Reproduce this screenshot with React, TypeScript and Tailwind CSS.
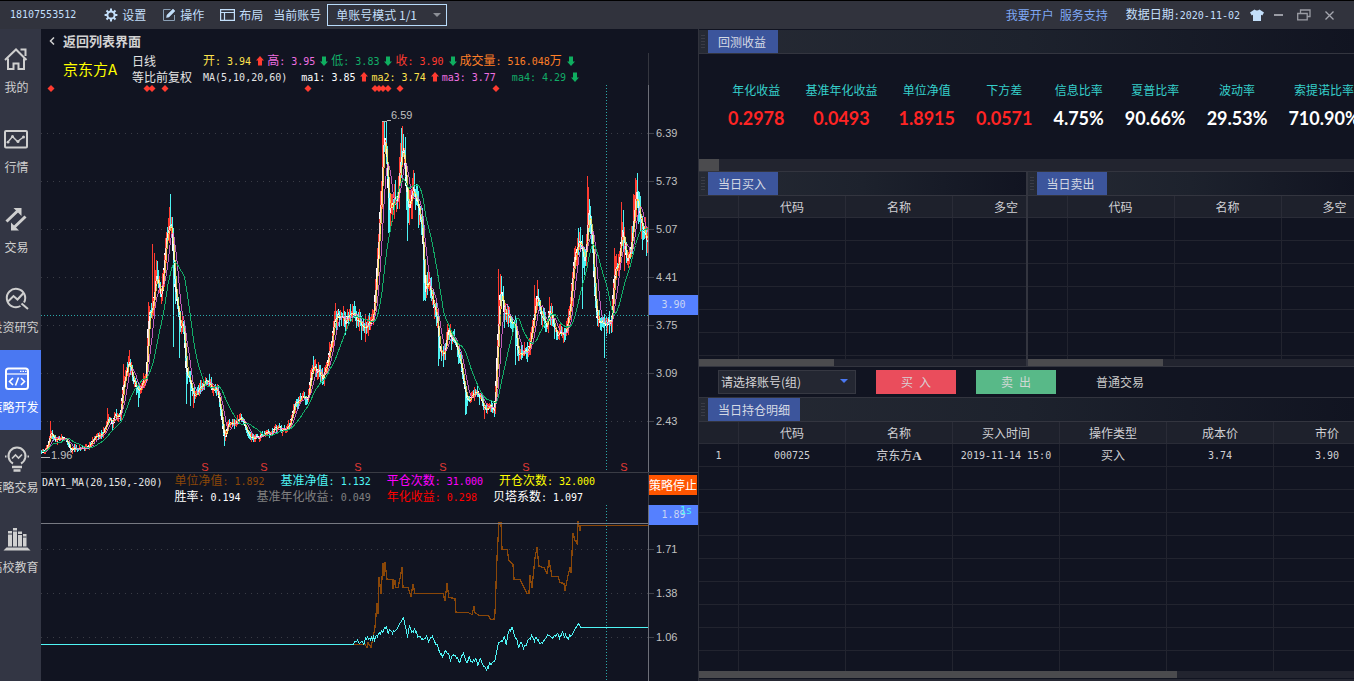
import type { ReactNode } from 'react';
import clsx from 'clsx';

type Point = [number, number];

// Price curve in chart pixels
const PRICE: Point[] = [
  [41, 453], [44, 451], [48, 444], [50, 433], [55, 440], [65, 438], [70, 449], [77, 448], [88, 447], [95, 437],
  [102, 435], [108, 417], [112, 423], [114, 416], [120, 415], [123, 383], [129, 362], [133, 380], [138, 393],
  [143, 380], [146, 377], [148, 313], [152, 307], [156, 273], [161, 297], [164, 263], [167, 233], [171, 228],
  [174, 283], [177, 307], [180, 333], [183, 323], [186, 373], [190, 383], [194, 397], [200, 387], [206, 380],
  [211, 388], [217, 388], [220, 410], [224, 440], [228, 423], [233, 423], [240, 418], [245, 427], [250, 437],
  [258, 437], [265, 432], [270, 433], [277, 427], [285, 432], [290, 423], [293, 407], [300, 397], [307, 400],
  [311, 373], [313, 367], [323, 377], [328, 357], [335, 317], [340, 315], [345, 323], [350, 310], [357, 320],
  [363, 328], [370, 322], [373, 317], [376, 277], [378, 240], [382, 173], [383, 140], [386, 147], [389, 213],
  [393, 200], [398, 190], [402, 140], [405, 173], [408, 213], [413, 190], [417, 203], [422, 233], [424, 290],
  [428, 283], [433, 303], [437, 320], [439, 353], [443, 357], [447, 333], [452, 340], [457, 347], [462, 373],
  [466, 400], [470, 397], [474, 390], [480, 400], [485, 410], [490, 405], [494, 410], [496, 373], [498, 323],
  [500, 290], [504, 313], [510, 320], [515, 323], [517, 353], [523, 353], [529, 350], [533, 320], [537, 297],
  [542, 320], [547, 327], [549, 310], [555, 330], [562, 337], [567, 330], [571, 290], [574, 257], [579, 240],
  [583, 260], [586, 250], [588, 200], [592, 240], [594, 290], [597, 320], [605, 328], [608, 317], [611, 327],
  [614, 267], [618, 267], [622, 230], [626, 260], [630, 253], [633, 220], [636, 190], [639, 213], [643, 233],
  [648, 243],
];

// Long wicks: x -> far end of the wick
const WICKS: Record<number, number> = {
  50: 421, 107: 408, 123: 364, 129: 350, 138: 407, 152: 244, 154: 253, 157: 261, 169: 207, 170: 194, 173: 347,
  179: 358, 186: 404, 190: 406, 193: 408, 224: 446, 313: 356, 335: 303, 361: 340, 382: 121, 386: 122, 388: 233,
  402: 127, 401: 128, 407: 241, 413: 170, 423: 301, 424: 300, 438: 366, 443: 367, 447: 324, 465: 415, 466: 414,
  484: 419, 494: 417, 498: 269, 500: 278, 515: 365, 534: 285, 537: 287, 549: 297, 578: 228, 582: 309, 587: 176,
  588: 187, 604: 358, 614: 248, 621: 202, 624: 271, 633: 194, 635: 178, 636: 180, 642: 250, 646: 256,
};

const NET_VALUE: Point[] = [
  [353, 644], [365, 644], [367, 647], [368, 642], [371, 647], [373, 637], [375, 627], [377, 603], [378, 613],
  [379, 577], [381, 593], [383, 563], [384, 575], [385, 562], [387, 579], [393, 579], [393, 588], [395, 580],
  [396, 587], [398, 587], [400, 578], [402, 567], [403, 587], [408, 587], [411, 596], [413, 584], [415, 593],
  [443, 593], [445, 600], [447, 583], [449, 597], [455, 598], [456, 612], [468, 612], [472, 614], [474, 606],
  [475, 612], [479, 615], [488, 615], [491, 619], [494, 619], [495, 613], [497, 557], [499, 522], [501, 522],
  [502, 549], [507, 549], [509, 560], [513, 564], [514, 579], [520, 579], [523, 585], [527, 593], [529, 593],
  [530, 575], [532, 587], [535, 557], [537, 547], [539, 566], [544, 567], [547, 573], [549, 560], [552, 576],
  [558, 576], [560, 582], [564, 583], [565, 590], [568, 575], [570, 567], [571, 572], [573, 533], [575, 540],
  [577, 543], [578, 521], [580, 530], [581, 525], [648, 525],
];

const BENCHMARK: Point[] = [
  [353, 644], [357, 641], [362, 643], [366, 638], [374, 638], [380, 632], [386, 627], [387, 632], [390, 630],
  [392, 632], [395, 630], [397, 629], [400, 622], [403, 617], [405, 625], [407, 637], [409, 627], [412, 632],
  [414, 629], [417, 635], [420, 637], [423, 640], [426, 635], [428, 642], [432, 635], [435, 642], [437, 645],
  [440, 653], [443, 655], [445, 650], [447, 651], [450, 660], [453, 653], [457, 657], [459, 661], [463, 653],
  [466, 663], [469, 657], [472, 663], [475, 658], [477, 663], [480, 660], [484, 666], [486, 670], [489, 664],
  [494, 662], [498, 642], [502, 640], [504, 637], [506, 643], [508, 630], [512, 628], [515, 637], [518, 645],
  [521, 642], [523, 648], [527, 642], [531, 636], [533, 640], [537, 638], [540, 645], [543, 640], [547, 635],
  [552, 637], [557, 633], [559, 636], [562, 632], [564, 635], [568, 637], [572, 632], [578, 625], [581, 627],
];

function seeded(seed: number) {
  let s = seed;
  return () => {
    s = (s * 16807) % 2147483647;
    return s / 2147483647;
  };
}

function valueAt(points: Point[], x: number) {
  for (let i = 1; i < points.length; i++) {
    const [x0, y0] = points[i - 1];
    const [x1, y1] = points[i];
    if (x <= x1) return x1 === x0 ? y1 : y0 + ((y1 - y0) * (x - x0)) / (x1 - x0);
  }
  return points[points.length - 1][1];
}

function buildCandles() {
  const rnd = seeded(725);
  const closes: number[] = [];
  let up = '';
  let down = '';
  for (let x = 41; x < 648; x++) {
    const base = valueAt(PRICE, x);
    const amp = 3 + (455 - base) * 0.055;
    const close = base + (rnd() - 0.5) * amp;
    const prev = closes.length ? closes[closes.length - 1] : close;
    const wick = WICKS[x];
    let top = Math.min(close, prev) - rnd() * amp;
    let bottom = Math.max(close, prev) + rnd() * amp;
    if (wick !== undefined) {
      top = Math.min(top, wick);
      bottom = Math.max(bottom, wick);
    }
    top = Math.max(121, top);
    const seg = `M${x + 0.5} ${top.toFixed(0)}V${bottom.toFixed(0)}`;
    if (close + (rnd() - 0.5) * amp < prev) up += seg;
    else down += seg;
    closes.push(close);
  }
  return { closes, up, down };
}

function average(closes: number[], n: number) {
  return closes
    .map((_, i) => {
      const part = closes.slice(Math.max(0, i - n + 1), i + 1);
      const y = part.reduce((a, b) => a + b, 0) / part.length;
      return `${i + 41.5},${y.toFixed(1)}`;
    })
    .join(' ');
}

function jagged(points: Point[], amp: number) {
  const rnd = seeded(31);
  let out = '41,644.5 353,644.5 ';
  for (let x = 354; x < 581; x++) {
    out += `${x + 0.5},${(valueAt(points, x) + 0.5 + (rnd() - 0.5) * amp).toFixed(1)} `;
  }
  return out + '581,627.5 648,627.5';
}

const candles = buildCandles();
const MA_WHITE = average(candles.closes, 2);
const MA_YELLOW = average(candles.closes, 4);
const MA_PINK = average(candles.closes, 8);
const MA_GREEN = average(candles.closes, 21);
const NET_LINE = NET_VALUE.map(([x, y]) => `${x},${y + 0.5}`).join(' ');
const BENCH_LINE = jagged(BENCHMARK, 4);

const MARKS = [51, 147, 152, 165, 308, 375, 379, 383, 388, 400, 496];
const SELLS = [205, 264, 358, 443, 526, 624];

// Latin letters and digits are half as wide as a Chinese character
function Num({ children, className }: { children: ReactNode; className?: string }) {
  return (
    <span className={clsx("font-['DejaVu_Sans_Mono',monospace] text-[10px] whitespace-pre", className)}>{children}</span>
  );
}

function Arrow({ up }: { up?: boolean }) {
  return (
    <svg viewBox="0 0 16 10" className={clsx('h-2.5 w-4 shrink-0', up ? 'text-[#ff3b30]' : 'text-[#0fae60]')}>
      <path d={up ? 'M9 0L13 4.500H11V9.500H7V4.500H5Z' : 'M9 10L5 5.500H7V.5H11V5.500H13Z'} fill="currentColor" />
    </svg>
  );
}

function Field({ label, value, unit, color }: { label?: string; value: string; unit?: string; color: string }) {
  return (
    <span className={clsx('shrink-0 whitespace-nowrap', color)}>
      {label}
      <Num>{value}</Num>
      {unit}
    </span>
  );
}

function TopBar() {
  return (
    <header className="flex h-[29px] shrink-0 items-center justify-between border-t border-black bg-[#31333d] pl-2.5 pr-5 text-[#c3dffa]">
      <div className="flex items-center">
        <Num>18107553512</Num>
        <button className="ml-7 flex items-center gap-1">
          <svg viewBox="0 0 14 14" className="h-3.5 w-3.5" fill="none" stroke="currentColor">
            <circle cx="7" cy="7" r="3.600" strokeWidth="2" />
            <path
              d="M7 .6V3M7 11v2.400M.6 7H3M11 7h2.400M2.500 2.500l1.700 1.700M9.800 9.800l1.700 1.700M2.500 11.500l1.700-1.700M9.800 4.200l1.700-1.700"
              strokeWidth="2"
            />
          </svg>
          设置
        </button>
        <button className="ml-4 flex items-center gap-1">
          <svg viewBox="0 0 14 14" className="h-3.5 w-3.5" fill="none" stroke="currentColor">
            <path d="M8.500 1.500H1.500v11h11V7" stroke="#8ba0b6" />
            <path d="M4.500 9.500l.5-2.500L11 1l2 2-6 6z" fill="currentColor" strokeWidth=".5" />
          </svg>
          操作
        </button>
        <button className="ml-4 flex items-center gap-1">
          <svg viewBox="0 0 15 12" className="h-3 w-[15px]" fill="none" stroke="currentColor" strokeWidth="1.200">
            <path d="M.6.6h13.800v10.800H.6zM.6 3.500h13.800M4.500 3.500v8" />
          </svg>
          布局
        </button>
        <label htmlFor="account-mode" className="ml-2.5">
          当前账号
        </label>
        <div className="relative ml-1.5">
          <select
            id="account-mode"
            className="h-[22px] w-[120px] appearance-none border border-[#b9dcfb] bg-transparent pl-2 outline-none"
          >
            <option>单账号模式 1/1</option>
          </select>
          <svg viewBox="0 0 8 4" className="pointer-events-none absolute right-1.5 top-[9px] h-1 w-2">
            <path d="M0 0H8L4 4Z" fill="#8c8f96" />
          </svg>
        </div>
      </div>
      <div className="flex items-center">
        <a href="#open" className="text-[#7fa8f5]">
          我要开户
        </a>
        <a href="#support" className="ml-1.5 text-[#7fa8f5]">
          服务支持
        </a>
        <span className="ml-[18px]">
          数据日期<Num>:2020-11-02</Num>
        </span>
        <button aria-label="skin" className="ml-2.5">
          <svg viewBox="0 0 14 12" className="h-3 w-3.5">
            <path d="M4.500.5Q7 2.500 9.500.5L14 3.500 12.300 6.500 11 5.800V12H3V5.800L1.700 6.500 0 3.500Z" fill="currentColor" />
          </svg>
        </button>
        <button aria-label="minimize" className="ml-2.5 text-[#9a9ca4]">
          <svg viewBox="0 0 9 10" className="h-2.5 w-[9px]">
            <path d="M0 5H9" stroke="currentColor" strokeWidth="2" />
          </svg>
        </button>
        <button aria-label="restore" className="ml-3.5 text-[#9a9ca4]">
          <svg viewBox="0 0 14 12" className="h-3 w-3.5" fill="none" stroke="currentColor" strokeWidth="1.300">
            <path d="M.7 4.500h9.500v6.300H.7zM3.500 4.500V1h9.500v6.500h-2.800" />
          </svg>
        </button>
        <button aria-label="close" className="ml-3.5 text-[#a5a7af]">
          <svg viewBox="0 0 9 9" className="h-[9px] w-[9px]">
            <path d="M.5.5l8 8M8.500.5l-8 8" stroke="currentColor" strokeWidth="1.300" />
          </svg>
        </button>
      </div>
    </header>
  );
}

const NAV: { label: string; icon: ReactNode; active?: boolean }[] = [
  { label: '我的', icon: <path d="M1 13L12 2.500 22.500 13M16.500 2.500h5V9M4 11.500V22h5.500v-5.500h5V22H20V11.500" /> },
  {
    label: '行情',
    icon: (
      <>
        <rect x="1" y="4" width="22" height="16.500" rx="1" />
        <path d="M3.500 15.500L8.500 9.500 13.500 14.500 19.500 10" strokeWidth="1.400" />
        <g fill="currentColor" stroke="none">
          <circle cx="4" cy="15.200" r="1.400" />
          <circle cx="8.500" cy="9.500" r="1.500" />
          <circle cx="14" cy="14.500" r="1.500" />
          <circle cx="19.500" cy="10" r="1.500" />
        </g>
      </>
    ),
  },
  {
    label: '交易',
    icon: (
      <>
        <path d="M2.500 14.500L13.500 4M21.500 9.500L10.500 20" strokeWidth="3" />
        <path d="M9.500 1h8v8zM15 23.500H7V15.500z" fill="currentColor" stroke="none" />
      </>
    ),
  },
  {
    label: '投资研究',
    icon: (
      <>
        <path d="M19 15.500A9.200 9.200 0 1 0 15.500 19M16.500 16.500l6.500 5.500" />
        <path d="M3 14.500L8.500 9l4 3.500L18.500 6" />
      </>
    ),
  },
  {
    label: '策略开发',
    active: true,
    icon: (
      <>
        <rect x="1" y="1.500" width="22" height="20.500" rx="2.500" />
        <path d="M1 7h22" strokeWidth="1.200" />
        <path d="M15 4.300h1.500M17.500 4.300H19M20 4.300h1.500" strokeWidth="1.300" />
        <path d="M8 11L4.500 14.500 8 18M16 11l3.500 3.500L16 18M13.500 10.500l-3 8" strokeWidth="1.600" />
      </>
    ),
  },
  {
    label: '策略交易',
    icon: (
      <>
        <path d="M8 16.500A8.500 8.500 0 1 1 16 16.500M0 9.500h1.500M22.500 9.500H24" />
        <path d="M7 11.500L10.500 8l3 3L17 7.500" strokeWidth="1.600" />
        <path d="M7 20h10M8.500 23.500h7" strokeWidth="2.300" />
      </>
    ),
  },
  {
    label: '高校教育',
    icon: (
      <g fill="currentColor" stroke="none">
        <path d="M3 4h4v15.500H3zM8 1h4v18.500H8zM13 4.500h4v15h-4zM18 7h3.500v12.500H18z" />
        <path d="M-1.500 23.500L1.500 20.500h21l3 3z" />
        <path d="M3 7h4M8 4h4M13 7.500h4M18 10h3.500" stroke="#333644" strokeWidth="1" />
      </g>
    ),
  },
];

function Sidebar() {
  return (
    <nav className="w-[41px] shrink-0 overflow-hidden bg-[#333644] pt-px text-[#cfcfcf]">
      {NAV.map(item => (
        <button
          key={item.label}
          className={clsx('flex h-20 w-full justify-center overflow-hidden pr-2', item.active && 'bg-[#4a78f2] text-white')}
        >
          <span className="flex flex-col items-center gap-2 pt-[17px]">
            <svg viewBox="0 0 24 24" className="h-6 w-6 overflow-visible" fill="none" stroke="currentColor" strokeWidth="2">
              {item.icon}
            </svg>
            <span className={clsx('whitespace-nowrap leading-4', item.label.length > 2 && 'pr-1')}>{item.label}</span>
          </span>
        </button>
      ))}
    </nav>
  );
}

function Grid({ rows }: { rows: number[] }) {
  return (
    <>
      {rows.map(y => (
        <path key={y} d={`M41 ${y + 0.5}H648`} stroke="#3a3c46" strokeDasharray="1 5" />
      ))}
    </>
  );
}

function AxisLabel({ value, className }: { value: string; className: string }) {
  return (
    <div className={clsx("flex items-center gap-0.5 font-['Liberation_Sans',sans-serif] text-[11px] text-[#c0c0c0]", className)}>
      <span className="h-px w-[5px] bg-[#3f414a]" />
      {value}
    </div>
  );
}

function PriceChart() {
  return (
    <div className="flex h-[387px] shrink-0">
      <svg
        viewBox="41 85 607 387"
        preserveAspectRatio="none"
        className="h-full min-w-0 flex-1"
        fill="none"
        shapeRendering="crispEdges"
      >
        <Grid rows={[133, 181, 229, 277, 325, 373, 421]} />
        {MARKS.map(x => (
          <path key={x} d={`M${x - 3.5} 88.500l3.500-3.500 3.500 3.500-3.500 3.500z`} fill="#ff3b30" shapeRendering="auto" />
        ))}
        <polyline points={MA_WHITE} stroke="#ffffff" strokeWidth="2" />
        <path d={candles.up} stroke="#ff3b30" />
        <path d={candles.down} stroke="#4df3f3" />
        <polyline points={MA_WHITE} stroke="#ffffff" strokeWidth=".8" />
        <polyline points={MA_YELLOW} stroke="#ffe34d" strokeWidth=".8" />
        <polyline points={MA_PINK} stroke="#ee6fe0" strokeWidth=".8" />
        <polyline points={MA_GREEN} stroke="#12ad68" />
        <path d="M41 315.500H648M606.500 85V470" stroke="#2ba8a8" strokeDasharray="1 2" />
        <path d="M382 121h5l4-1M41 457h5l4 1" stroke="#b9b9b9" />
        <g fontFamily="Liberation Sans, sans-serif" fontSize="11" shapeRendering="auto">
          <text x="391" y="119" fill="#c0c0c0">6.59</text>
          <text x="51" y="459" fill="#c0c0c0">1.96</text>
          {SELLS.map(x => (
            <text key={x} x={x} y="471" textAnchor="middle" fill="#e03a35">S</text>
          ))}
        </g>
      </svg>
      <div className="relative w-[50px] shrink-0 border-l border-[#6d6f78] pt-6">
        {['6.39', '5.73', '5.07', '4.41', '3.75', '3.09', '2.43'].map(v => (
          <AxisLabel key={v} value={v} className="h-12" />
        ))}
        <div className="absolute inset-x-0 top-[210px] flex h-5 items-center justify-center bg-[#5580ff] text-[#c8d4f5]">
          <Num>3.90</Num>
        </div>
      </div>
    </div>
  );
}

function ReturnChart() {
  return (
    <div className="flex min-h-0 flex-1">
      <svg
        viewBox="41 505 607 176"
        preserveAspectRatio="none"
        className="h-full min-w-0 flex-1"
        fill="none"
        shapeRendering="crispEdges"
      >
        <Grid rows={[549, 593, 637]} />
        <polyline points={NET_LINE} stroke="#8a4708" strokeWidth="1.300" />
        <polyline points={BENCH_LINE} stroke="#4ff5f5" />
        <path d="M41 523.500H648" stroke="#777982" />
        <path d="M606.500 505V681" stroke="#2ba8a8" strokeDasharray="1 2" />
      </svg>
      <div className="w-[50px] shrink-0 border-l border-[#6d6f78]">
        <div className="relative mb-0.5 flex h-5 items-center justify-center bg-[#5580ff] text-[#c8d4f5]">
          <Num>1.89</Num>
          <Num className="absolute right-1.5 top-0 leading-3 text-[#4ff5f5]">1s</Num>
        </div>
        {['1.71', '1.38', '1.06'].map(v => (
          <AxisLabel key={v} value={v} className="h-11" />
        ))}
      </div>
    </div>
  );
}

function ChartPanel() {
  return (
    <section className="flex min-w-0 flex-col overflow-hidden">
      <button className="flex h-6 shrink-0 items-center gap-2 pl-2 text-[13px] font-bold text-[#d2d2d2]">
        <svg viewBox="0 0 6 8" className="h-2 w-1.5" fill="none" stroke="currentColor" strokeWidth="1.500">
          <path d="M5 .5L1.500 4 5 7.500" />
        </svg>
        返回列表界面
      </button>
      <div className="flex h-8 shrink-0">
        <div className="flex min-w-0 flex-1 overflow-hidden leading-4 text-[#e4e4e4]">
          <h1 className="ml-[22px] w-[69px] shrink-0 whitespace-nowrap text-[15px] leading-8 text-[#ffff00]">京东方A</h1>
          <div className="w-[71px] shrink-0 whitespace-nowrap">
            <p>日线</p>
            <p>等比前复权</p>
          </div>
          <div>
            <p className="flex h-4 items-center">
              <Field label="开" value=": 3.94" color="text-[#ffe34d]" />
              <Arrow up />
              <Field label="高" value=": 3.95" color="text-[#ee6fe0]" />
              <Arrow />
              <Field label="低" value=": 3.83" color="text-[#12ad68]" />
              <Arrow />
              <Field label="收" value=": 3.90" color="text-[#ff3b30]" />
              <Arrow />
              <Field label="成交量" value=": 516.048" unit="万" color="text-[#ff7f27]" />
              <Arrow />
            </p>
            <p className="flex h-4 items-center">
              <Field value="MA(5,10,20,60)" color="mr-3.5" />
              <Field value="ma1: 3.85" color="text-white" />
              <Arrow up />
              <Field value="ma2: 3.74" color="text-[#ffe34d]" />
              <Arrow up />
              <Field value="ma3: 3.77" color="mr-4 text-[#ee6fe0]" />
              <Field value="ma4: 4.29" color="text-[#12ad68]" />
              <Arrow />
            </p>
          </div>
        </div>
        <div className="w-[50px] shrink-0 border-l border-[#34363f]" />
      </div>
      <PriceChart />
      <div className="flex h-[33px] shrink-0 border-t border-[#3a3c45]">
        <div className="flex min-w-0 flex-1 overflow-hidden pl-px leading-4">
          <Field value="DAY1_MA(20,150,-200)" color="mr-3 text-[#e4e4e4]" />
          <div>
            <p className="flex h-4 items-center gap-4">
              <Field label="单位净值" value=": 1.892" color="text-[#8a4708]" />
              <Field label="基准净值" value=": 1.132" color="text-[#4ff5f5]" />
              <Field label="平仓次数" value=": 31.000" color="text-[#ff00ff]" />
              <Field label="开仓次数" value=": 32.000" color="text-[#ffff00]" />
            </p>
            <p className="flex h-4 items-center gap-4">
              <Field label="胜率" value=": 0.194" color="text-white" />
              <Field label="基准年化收益" value=": 0.049" color="text-[#808080]" />
              <Field label="年化收益" value=": 0.298" color="text-[#ff0000]" />
              <Field label="贝塔系数" value=": 1.097" color="text-white" />
            </p>
          </div>
        </div>
        <div className="w-[50px] shrink-0 border-l border-[#3a3c45] pt-0.5">
          <button className="h-5 whitespace-nowrap bg-[#ff5500] text-white">策略停止</button>
        </div>
      </div>
      <ReturnChart />
    </section>
  );
}

function PanelTitle({ children }: { children: string }) {
  return (
    <div className="flex h-6 shrink-0 border-b border-[#33353f] bg-linear-to-r from-[#262a34] via-[#1d222d] to-[#111421]">
      <span className="flex w-[9px] flex-col justify-center gap-0.5 pl-0.5">
        {[0, 1, 2, 3, 4].map(i => (
          <span key={i} className="h-px w-1 bg-[#3a3c46]" />
        ))}
      </span>
      <h2 className="flex min-w-[70px] items-center bg-[#3c559c] px-2.5 text-[#d5d9e4]">{children}</h2>
    </div>
  );
}

const METRICS = [
  ['年化收益', '0.2978'],
  ['基准年化收益', '0.0493'],
  ['单位净值', '1.8915'],
  ['下方差', '0.0571'],
  ['信息比率', '4.75%'],
  ['夏普比率', '90.66%'],
  ['波动率', '29.53%'],
  ['索提诺比率', '710.90%'],
];

function Metrics() {
  return (
    <dl className="flex h-[105px] shrink-0 gap-[21px] overflow-hidden pl-[29px] pt-7 text-center">
      {METRICS.map(([label, value]) => (
        <div key={label} className="shrink-0 whitespace-nowrap">
          <dt className="leading-4 text-[#35d0cb]">{label}</dt>
          <dd
            className={clsx(
              "mt-2 font-[Lato,sans-serif] text-[18px] font-bold leading-6",
              value.endsWith('%') ? 'text-white' : 'text-[#ff2424]',
            )}
          >
            {value}
          </dd>
        </div>
      ))}
    </dl>
  );
}

function ScrollTrack({ children, thin }: { children: ReactNode; thin?: boolean }) {
  return <div className={clsx('flex shrink-0 bg-[#22242f]', thin ? 'h-[7px]' : 'h-3')}>{children}</div>;
}

function DataTable({ columns, rows, blanks }: { columns: string[]; rows: ReactNode[][]; blanks: number }) {
  const all = [...rows, ...Array.from({ length: blanks }, () => columns.map(() => '') as ReactNode[])];
  return (
    <table className="w-max table-fixed border-separate border-spacing-0 text-center text-[#d0d0d4]">
      <thead>
        <tr>
          {columns.map((c, i) => (
            <th
              key={i}
              className={clsx(
                'h-[22px] border-b border-r border-[#2a2c37] bg-[#1e212c] p-0 font-normal leading-4',
                i === 0 ? 'w-10 min-w-10' : 'w-[107px] min-w-[107px]',
              )}
            >
              {c}
            </th>
          ))}
        </tr>
      </thead>
      <tbody>
        {all.map((row, r) => (
          <tr key={r}>
            {row.map((cell, i) => (
              <td key={i} className="h-[23px] whitespace-nowrap border-b border-r border-[#22242f] p-0 leading-4">
                {cell}
              </td>
            ))}
          </tr>
        ))}
      </tbody>
    </table>
  );
}

function DayTrades({ title }: { title: string }) {
  return (
    <div className="flex min-w-0 flex-1 flex-col overflow-hidden">
      <PanelTitle>{title}</PanelTitle>
      <div className="h-[163px] overflow-hidden">
        <DataTable columns={['', '代码', '名称', '多空']} rows={[]} blanks={7} />
      </div>
      <ScrollTrack thin>
        <span className="w-[135px] bg-[#4b4b4e]" />
      </ScrollTrack>
    </div>
  );
}

const HOLDING: ReactNode[] = [
  <Num>1</Num>,
  <Num>000725</Num>,
  <>
    京东方<span className="font-['Liberation_Serif',serif] text-[13px] font-bold">A</span>
  </>,
  <Num>2019-11-14 15:0</Num>,
  '买入',
  <Num>3.74</Num>,
  <Num>3.90</Num>,
];

function BacktestPanel() {
  return (
    <section className="flex min-w-0 flex-col overflow-hidden border-l border-[#30323c] pt-px">
      <PanelTitle>回测收益</PanelTitle>
      <Metrics />
      <ScrollTrack>
        <span className="w-5 bg-[#4b4b4e]" />
      </ScrollTrack>
      <div className="flex shrink-0 border-y border-[#33353f]">
        <DayTrades title="当日买入" />
        <div className="w-0.5 bg-[#33353f]" />
        <DayTrades title="当日卖出" />
      </div>
      <form className="flex h-[30px] shrink-0 items-center gap-5 pl-[19px]">
        <div className="relative">
          <select
            aria-label="账号"
            className="h-6 w-[138px] appearance-none border border-[#363842] bg-[#242732] pl-0.5 text-[#d5d5d8] outline-none"
          >
            <option>请选择账号(组)</option>
          </select>
          <svg viewBox="0 0 8 4" className="pointer-events-none absolute right-2 top-[9px] h-1 w-2">
            <path d="M0 0H8L4 4Z" fill="#4a78f2" />
          </svg>
        </div>
        <button type="button" className="h-6 w-20 whitespace-pre bg-[#ea4d5c] text-[#d9d0d4]">
          买&ensp;入
        </button>
        <button type="button" className="h-6 w-20 whitespace-pre bg-[#58b988] text-[#d0d8d4]">
          卖&ensp;出
        </button>
        <span className="ml-5 text-[#c8c8c8]">普通交易</span>
      </form>
      <div className="flex min-h-0 flex-1 flex-col border-t border-[#33353f]">
        <PanelTitle>当日持仓明细</PanelTitle>
        <div className="min-h-0 flex-1 overflow-hidden">
          <DataTable
            columns={['', '代码', '名称', '买入时间', '操作类型', '成本价', '市价']}
            rows={[HOLDING]}
            blanks={9}
          />
        </div>
        <ScrollTrack thin>
          <span className="w-[73%] bg-[#4b4b4e]" />
        </ScrollTrack>
        <div className="mt-px h-0.5 shrink-0 bg-[#262833]" />
      </div>
    </section>
  );
}

export default function App() {
  return (
    <div className="flex h-screen flex-col overflow-hidden bg-[#111421] font-['Noto_Sans_CJK_SC',sans-serif] text-[12px] leading-4">
      <TopBar />
      <div className="flex min-h-0 flex-1">
        <Sidebar />
        <main className="grid min-w-0 flex-1 grid-cols-[657fr_656fr]">
          <ChartPanel />
          <BacktestPanel />
        </main>
      </div>
    </div>
  );
}
